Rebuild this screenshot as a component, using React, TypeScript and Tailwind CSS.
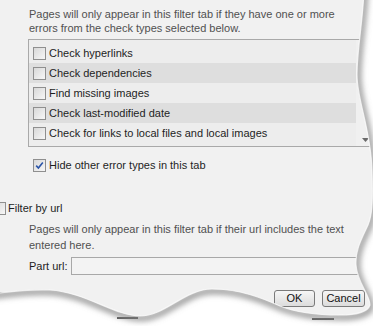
import React from "react";

const EDGE =
  "M -10 -10 L 364 -10 C 363 20, 357 50, 357 75 C 357 100, 371 130, 372 170 C 373 205, 372 215, 368 225 C 362 238, 355 250, 356 265 C 357 282, 370 295, 370 305 C 368 312, 355 315, 340 315 C 315 315, 295 312, 280 306 C 262 298, 240 289, 212 289 C 185 289, 165 316, 140 316 C 115 316, 85 292, 50 290 C 25 289, 8 292, -10 294 Z";

function Box({ checked = false }: { checked?: boolean }) {
  return (
    <span className="relative flex h-[13px] w-[13px] shrink-0 items-center justify-center border border-[#8f8f8f] bg-gradient-to-br from-[#d8d8d8] to-[#f7f7f7]">
      {checked && (
        <svg width="9" height="9" viewBox="0 0 9 9">
          <path d="M1.2 4.6 L3.4 7 L7.8 1.6" fill="none" stroke="#2a54a8" strokeWidth="1.6" />
        </svg>
      )}
    </span>
  );
}

const rows = [
  { label: "Check hyperlinks", dark: false },
  { label: "Check dependencies", dark: true },
  { label: "Find missing images", dark: false },
  { label: "Check last-modified date", dark: true },
  { label: "Check for links to local files and local images", dark: false },
];

export default function App() {
  return (
    <div
      className="relative h-[326px] w-[373px] overflow-hidden bg-[#f1f1f1] text-[11px] text-[#1e1e1e]"
      style={{ fontFamily: '"Liberation Sans", Arial, sans-serif' }}
    >
      <div className="pl-[29px] pt-[7px] leading-[14px] text-[#505050]">
        <p>Pages will only appear in this filter tab if they have one or more</p>
        <p>errors from the check types selected below.</p>
      </div>

      <div className="ml-[28px] mt-[4px] flex h-[108px] w-[350px] border border-[#a9a9a9] bg-[#ededed]">
        <div className="flex w-[327px] flex-col py-[3px]">
          {rows.map((r) => (
            <div
              key={r.label}
              className={`flex h-[20px] items-center gap-[3px] pl-[4px] ${r.dark ? "bg-[#dedede]" : "bg-[#ededed]"}`}
            >
              <Box />
              <span>{r.label}</span>
            </div>
          ))}
        </div>
        <div className="flex flex-1 flex-col justify-end bg-[#f0f0f0] pb-[4px] pl-[6px]">
          <svg width="7" height="4" viewBox="0 0 7 4">
            <path d="M0 0 H7 L3.5 4 Z" fill="#6a6a6a" />
          </svg>
        </div>
      </div>

      <div className="ml-[33px] mt-[11px] flex h-[14px] items-center gap-[3px]">
        <Box checked />
        <span>Hide other error types in this tab</span>
      </div>

      <div className="ml-[-7px] mt-[29px] flex h-[14px] items-center gap-[2px]">
        <Box />
        <span>Filter by url</span>
      </div>

      <div className="pl-[29px] pt-[6px] leading-[16px] text-[#505050]">
        <p>Pages will only appear in this filter tab if their url includes the text</p>
        <p>entered here.</p>
      </div>

      <div className="ml-[29px] mt-[4px] flex items-center gap-[3px]">
        <span>Part url:</span>
        <div className="h-[18px] flex-1 border border-[#a8a8a8] bg-[#f3f3f3]" />
      </div>

      <div className="mt-[15px] flex justify-end gap-[7px] pr-[8px]">
        <button className="flex h-[17px] w-[41px] items-center justify-center rounded-[3px] border border-[#7a7a7a] bg-gradient-to-b from-[#f6f6f6] to-[#dcdcdc] text-[11px] text-[#111]">
          OK
        </button>
        <button className="flex h-[17px] w-[43px] items-center justify-center rounded-[3px] border border-[#7a7a7a] bg-gradient-to-b from-[#f6f6f6] to-[#dcdcdc] text-[11px] text-[#111]">
          Cancel
        </button>
      </div>

      <svg className="pointer-events-none absolute inset-0" width="373" height="326" viewBox="0 0 373 326">
        <defs>
          <filter id="sh" x="-20%" y="-20%" width="140%" height="140%">
            <feGaussianBlur stdDeviation="3" />
          </filter>
          <mask id="outside">
            <rect x="0" y="0" width="373" height="326" fill="#fff" />
            <path d={EDGE} fill="#000" />
          </mask>
        </defs>
        <rect x="0" y="292" width="6" height="2" fill="#777" />
        <rect x="0" y="0" width="373" height="326" fill="#fff" mask="url(#outside)" />
        <rect x="117" y="317" width="21" height="2" fill="#5a5a5a" />
        <rect x="312" y="318" width="22" height="2" fill="#5a5a5a" />
        <g mask="url(#outside)">
          <path d={EDGE} fill="none" stroke="#808080" strokeWidth="5" filter="url(#sh)" transform="translate(1 2)" />
        </g>
        <path d={EDGE} fill="none" stroke="#ffffff" strokeWidth="1.2" opacity="0.7" />
      </svg>
    </div>
  );
}
